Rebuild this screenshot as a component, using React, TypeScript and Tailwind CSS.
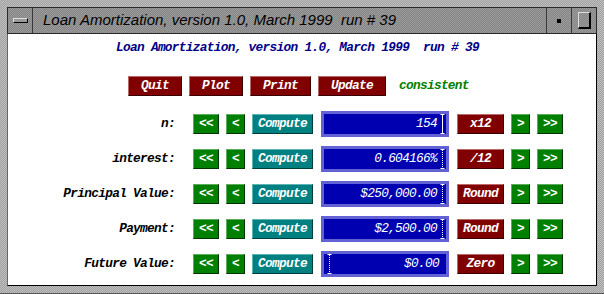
const tones = {
  red: "bg-[#800000] border-t-[#b86a6a] border-l-[#b86a6a] border-b-[#3a0000] border-r-[#3a0000]",
  green: "bg-[#008000] border-t-[#5cac5c] border-l-[#5cac5c] border-b-[#003400] border-r-[#003400]",
  teal: "bg-[#008080] border-t-[#5cb4b4] border-l-[#5cb4b4] border-b-[#003c3c] border-r-[#003c3c]",
};

type Tone = keyof typeof tones;

const Btn = ({ label, w, tone }: { label: string; w: string; tone: Tone }) => (
  <div
    className={`${w} ${tones[tone]} border h-[20px] flex items-center justify-center text-white font-bold italic leading-none`}
  >
    {label}
  </div>
);

const Cursor = ({ solid }: { solid?: boolean }) => (
  <svg width="5" height="20" viewBox="0 0 5 20" className="shrink-0">
    <line x1="0.5" y1="0.5" x2="4.5" y2="0.5" stroke="#fff" />
    <line x1="0.5" y1="19.5" x2="4.5" y2="19.5" stroke="#fff" />
    <line
      x1="2.5"
      y1="1"
      x2="2.5"
      y2="19"
      stroke="#fff"
      strokeDasharray={solid ? undefined : "1 1"}
    />
  </svg>
);

const rows = [
  { label: "n:", value: "154", right: "x12", solid: true, left: false },
  { label: "interest:", value: "0.604166%", right: "/12", solid: false, left: false },
  { label: "Principal Value:", value: "$250,000.00", right: "Round", solid: false, left: false },
  { label: "Payment:", value: "$2,500.00", right: "Round", solid: false, left: false },
  { label: "Future Value:", value: "$0.00", right: "Zero", solid: false, left: true },
];

const dither =
  "bg-[repeating-conic-gradient(#a2a2a2_0%_25%,#bebebe_0%_50%)] bg-[length:2px_2px]";
const ditherDark =
  "bg-[repeating-conic-gradient(#848484_0%_25%,#9c9c9c_0%_50%)] bg-[length:2px_2px]";

export default function App() {
  return (
    <div className={`w-[604px] h-[294px] ${dither} flex flex-col px-[7px] pt-[7px] pb-[7px] border-b border-b-[#555]`}>
      {/* title bar */}
      <div className={`h-[27px] ${ditherDark} flex border border-[#2a2a2a] shrink-0`}>
        <div className="w-[25px] border-r border-r-[#3a3a3a] flex items-center justify-center">
          <div className="w-[15px] h-[5px] bg-[#9a9a9a] border border-black border-t-[#ddd] border-l-[#ddd]" />
        </div>
        <div className="flex-1 flex items-center pl-[10px] font-['Liberation_Sans',sans-serif] italic text-[15px] text-black">
          Loan Amortization, version 1.0, March 1999&nbsp; run # 39
        </div>
        <div className="w-[25px] border-l border-l-[#3a3a3a] flex items-center justify-center">
          <div className="w-[4px] h-[4px] bg-black" />
        </div>
        <div className="w-[25px] border-l border-l-[#3a3a3a] flex items-center justify-center">
          <div className="w-[13px] h-[17px] border border-t-[#ddd] border-l-[#ddd] border-b-black border-r-black border-r-2 border-b-2" />
        </div>
      </div>

      {/* content */}
      <div className="flex-1 bg-white border-r border-b border-r-black border-b-black border-l border-l-[#666] font-['Liberation_Mono',monospace] text-[12.8px] tracking-[-0.7px] leading-none">
        <div className="pl-[108px] pt-[8px] text-[#000088] font-bold italic h-[14px]">
          Loan Amortization, version 1.0, March 1999&nbsp; run # 39
        </div>

        <div className="flex items-center gap-[7px] pl-[120px] mt-[28px]">
          <Btn label="Quit" w="w-[54px]" tone="red" />
          <Btn label="Plot" w="w-[54px]" tone="red" />
          <Btn label="Print" w="w-[61px]" tone="red" />
          <Btn label="Update" w="w-[68px]" tone="red" />
          <span className="ml-[6px] text-[#008000] font-bold italic">consistent</span>
        </div>

        <div className="flex flex-col gap-[9px] mt-[15px]">
          {rows.map((r) => (
            <div key={r.label} className="flex items-center h-[26px]">
              <div className="w-[167px] text-right font-bold italic text-black">{r.label}</div>
              <div className="ml-[18px] flex items-center gap-[7px]">
                <Btn label="<<" w="w-[26px]" tone="green" />
                <Btn label="<" w="w-[19px]" tone="green" />
                <Btn label="Compute" w="w-[61px]" tone="teal" />
              </div>
              <div
                className={`ml-[8px] w-[128px] h-[26px] bg-[#0000b0] border-[3px] border-[#6262d4] flex items-center text-white italic ${
                  r.left ? "justify-between pl-[3px] pr-[7px]" : "justify-end pr-[1px]"
                }`}
              >
                {r.left ? (
                  <>
                    <Cursor />
                    <span>{r.value}</span>
                  </>
                ) : (
                  <>
                    <span className="mr-[3px]">{r.value}</span>
                    <Cursor solid={r.solid} />
                  </>
                )}
              </div>
              <div className="ml-[8px] flex items-center gap-[7px]">
                <Btn label={r.right} w="w-[47px]" tone="red" />
                <Btn label=">" w="w-[19px]" tone="green" />
                <Btn label=">>" w="w-[26px]" tone="green" />
              </div>
            </div>
          ))}
        </div>
      </div>
    </div>
  );
}
